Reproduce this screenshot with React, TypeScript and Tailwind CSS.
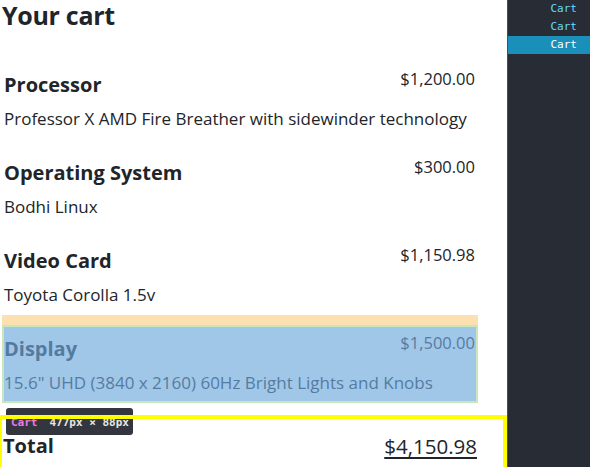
import React from "react";

const items = [
  { name: "Processor", price: "$1,200.00", desc: "Professor X AMD Fire Breather with sidewinder technology" },
  { name: "Operating System", price: "$300.00", desc: "Bodhi Linux" },
  { name: "Video Card", price: "$1,150.98", desc: "Toyota Corolla 1.5v" },
  { name: "Display", price: "$1,500.00", desc: "15.6\" UHD (3840 x 2160) 60Hz Bright Lights and Knobs", hl: true },
];

function Item({ name, price, desc, hl }: { name: string; price: string; desc: string; hl?: boolean }) {
  return (
    <div className="relative ml-[2px] mt-[10px] w-[476px] p-[2px]">
      <div className="h-[74px]">
        <div className="flex items-start justify-between">
          <h2 className="mt-[8px] whitespace-nowrap text-[20px] font-bold leading-[28px] text-[#212529]">{name}</h2>
          <div className="mt-[4px] whitespace-nowrap pr-[1px] text-[16.5px] leading-[24px] text-[#212529]">{price}</div>
        </div>
        <p className="mt-[8px] whitespace-nowrap text-[17px] leading-[24px] text-[#212529]">{desc}</p>
      </div>
      {hl && (
        <>
          <div className="absolute left-0 right-0 top-[-10px] h-[10px] bg-[#fde0b0]" />
          <div className="absolute inset-0 border-2 border-[#c9e7bb]" />
          <div className="absolute inset-[2px] bg-[rgba(111,168,220,0.66)]" />
        </>
      )}
    </div>
  );
}

export default function App() {
  return (
    <div
      className="flex h-[467px] w-[590px] overflow-hidden bg-white"
      style={{ fontFamily: '"Open Sans", "Noto Sans", sans-serif' }}
    >
      <div className="relative w-[507px]">
        <h1 className="h-[51px] pl-[2px] text-[25px] font-bold leading-[30px] tracking-[-0.3px] text-[#212529]">Your cart</h1>
        {items.map((it) => (
          <Item key={it.name} {...it} />
        ))}
        <div className="mt-[19px] flex h-[48px] items-center justify-between pl-[3px] pr-[30px]">
          <span className="text-[20px] font-bold text-[#212529]">Total</span>
          <span className="text-[20.5px] text-[#212529] underline decoration-[2px] underline-offset-[3px]">$4,150.98</span>
        </div>
        <div
          className="absolute left-[6px] top-[408px] flex h-[27px] w-[127px] items-center whitespace-nowrap rounded-[3px] bg-[#33363e] px-[5px] pt-[4px] text-[11px] font-bold"
          style={{ fontFamily: '"DejaVu Sans Mono", monospace' }}
        >
          <span className="text-[#ee78e6]">Cart</span>
          <span className="mx-[6px] mt-[-4px] h-[20px] w-px bg-[#8a8c90]" />
          <span className="text-[#e6e6e6]">477px × 88px</span>
        </div>
        <div className="absolute left-[-2px] top-[415px] h-[56px] w-[509px] border-4 border-[#ffff00]" />
      </div>
      <div
        className="flex w-[83px] flex-col border-l border-[#4a4d54] bg-[#282c34] text-[11px]"
        style={{ fontFamily: '"DejaVu Sans Mono", monospace' }}
      >
        <div className="h-[18px] pr-[13px] text-right leading-[18px] text-[#61dafb]">Cart</div>
        <div className="h-[18px] pr-[13px] text-right leading-[18px] text-[#61dafb]">Cart</div>
        <div className="h-[18px] bg-[#1a8fba] pr-[13px] text-right leading-[18px] text-white">Cart</div>
      </div>
    </div>
  );
}
